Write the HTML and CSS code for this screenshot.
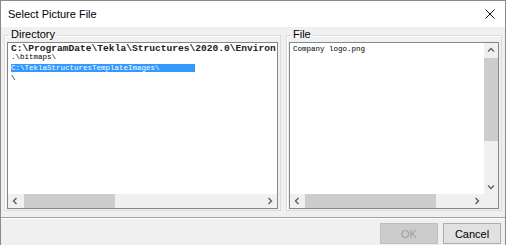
FILE: index.html
```html
<!DOCTYPE html>
<html lang="en">
<head>
  <meta charset="UTF-8" />
  <title>Select Picture File</title>
  <link rel="stylesheet" href="styles.css">
</head>
<body>

  <div class="window">
    <div class="titlebar">
      <span class="title">Select Picture File</span>
      <svg class="close" width="10" height="10" viewBox="0 0 10 10">
        <path d="M0.5 0.5 L9.5 9.5 M9.5 0.5 L0.5 9.5" stroke="#111" stroke-width="1" fill="none" />
      </svg>
    </div>

    <div class="content">
      <div class="groups">
        <fieldset class="group dir-group">
          <legend>Directory</legend>
          <div class="listbox">
            <div class="items">
              <div class="item big">C:\ProgramDate\Tekla\Structures\2020.0\Environ</div>
              <div class="item">.\bitmaps\</div>
              <div class="item selected">C:\TeklaStructuresTemplateImages\</div>
              <div class="item">\</div>
            </div>
            <div class="hscroll">
              <span class="arrow">
                <svg width="8" height="8" viewBox="0 0 8 8"><path d="M5.5 1 L2.5 4 L5.5 7" /></svg>
              </span>
              <span class="track">
                <span class="thumb dir-thumb"></span>
              </span>
              <span class="arrow">
                <svg width="8" height="8" viewBox="0 0 8 8"><path d="M2.5 1 L5.5 4 L2.5 7" /></svg>
              </span>
            </div>
          </div>
        </fieldset>

        <fieldset class="group file-group">
          <legend>File</legend>
          <div class="listbox">
            <div class="body-row">
              <div class="items">
                <div class="item file-item">Company logo.png</div>
              </div>
              <div class="vscroll">
                <span class="arrow">
                  <svg width="8" height="8" viewBox="0 0 8 8"><path d="M1 5.5 L4 2.5 L7 5.5" /></svg>
                </span>
                <span class="vtrack">
                  <span class="vthumb"></span>
                </span>
                <span class="arrow">
                  <svg width="8" height="8" viewBox="0 0 8 8"><path d="M1 2.5 L4 5.5 L7 2.5" /></svg>
                </span>
              </div>
            </div>
            <div class="hscroll">
              <span class="arrow">
                <svg width="8" height="8" viewBox="0 0 8 8"><path d="M5.5 1 L2.5 4 L5.5 7" /></svg>
              </span>
              <span class="track">
                <span class="thumb file-thumb"></span>
              </span>
              <span class="arrow">
                <svg width="8" height="8" viewBox="0 0 8 8"><path d="M2.5 1 L5.5 4 L2.5 7" /></svg>
              </span>
              <span class="corner"></span>
            </div>
          </div>
        </fieldset>
      </div>

      <div class="separator"></div>

      <div class="buttons">
        <button class="btn" disabled>OK</button>
        <button class="btn">Cancel</button>
      </div>
    </div>
  </div>

</body>
</html>
```

FILE: styles.css
```css
* {
  box-sizing: border-box;
}

body {
  margin: 0;
  background: #f0f0f0;
  font-family: 'Liberation Sans', Arial, sans-serif;
}

.window {
  width: 506px;
  height: 245px;
  border: 1px solid #8a8a8a;
  border-bottom: none;
  background: #f0f0f0;
  overflow: hidden;
}

/* Title bar */
.titlebar {
  height: 26px;
  background: #fff;
  display: flex;
  align-items: center;
  justify-content: space-between;
  padding: 0 10px 0 7px;
}

.title {
  font-size: 11px;
  color: #000;
}

.close {
  display: block;
}

.content {
  padding: 1px 3px 0 3px;
}

.groups {
  display: flex;
  gap: 5px;
}

/* Group boxes */
.group {
  margin: 0;
  padding: 0 2px 1px 2px;
  min-width: 0;
  border: 1px solid #dcdcdc;
  box-shadow: inset 1px 1px 0 #fff;
}

.group legend {
  font-size: 11px;
  line-height: 12px;
  padding: 0 2px 2px 2px;
  margin-left: 2px;
  color: #000;
}

.dir-group {
  width: 277px;
}

.file-group {
  flex: 1;
}

.listbox {
  height: 167px;
  border: 1px solid #828790;
  background: #fff;
  display: flex;
  flex-direction: column;
}

.items {
  flex: 1;
  padding: 1px 0 0 3px;
  font-family: 'Liberation Mono', 'Courier New', monospace;
  font-size: 7.5px;
  color: #000;
  overflow: hidden;
  white-space: nowrap;
}

.item {
  height: 8px;
  line-height: 8px;
}

.item.big {
  font-size: 9.6px;
  font-weight: bold;
  color: #222;
  height: 9px;
  line-height: 9px;
}

.item.selected {
  background: #3399ff;
  color: #fff;
  width: 184px;
  margin: 3px 0 2px 0;
}

.item.file-item {
  height: 10px;
  line-height: 10px;
}

/* Scrollbars */
.hscroll {
  height: 14px;
  display: flex;
  background: #f0f0f0;
}

.arrow {
  width: 14px;
  height: 14px;
  flex: none;
  display: flex;
  align-items: center;
  justify-content: center;
}

.arrow svg path {
  fill: none;
  stroke: #606060;
  stroke-width: 1.4;
}

.track {
  flex: 1;
  padding: 0 1px;
}

.thumb {
  display: block;
  height: 14px;
  background: #cdcdcd;
}

.dir-thumb {
  width: 91px;
  margin-left: 1px;
}

.file-thumb {
  width: 131px;
}

.corner {
  width: 14px;
  flex: none;
  background: #f0f0f0;
}

.body-row {
  flex: 1;
  display: flex;
  min-height: 0;
}

.vscroll {
  width: 14px;
  display: flex;
  flex-direction: column;
  background: #f0f0f0;
}

.vtrack {
  flex: 1;
  padding: 1px 0;
}

.vthumb {
  display: block;
  height: 83px;
  background: #cdcdcd;
}

/* Bottom */
.separator {
  margin: 6px -3px 0 -3px;
  height: 2px;
  border-top: 1px solid #a0a0a0;
  border-bottom: 1px solid #fff;
}

.buttons {
  display: flex;
  justify-content: flex-end;
  gap: 5px;
  padding-top: 4px;
  padding-right: 1px;
}

.btn {
  width: 58px;
  height: 21px;
  font-family: 'Liberation Sans', Arial, sans-serif;
  font-size: 11px;
  background: #e1e1e1;
  border: 1px solid #adadad;
  color: #000;
  padding: 0;
}

.btn:disabled {
  background: #cccccc;
  border-color: #bfbfbf;
  color: #a0a0a0;
}
```
